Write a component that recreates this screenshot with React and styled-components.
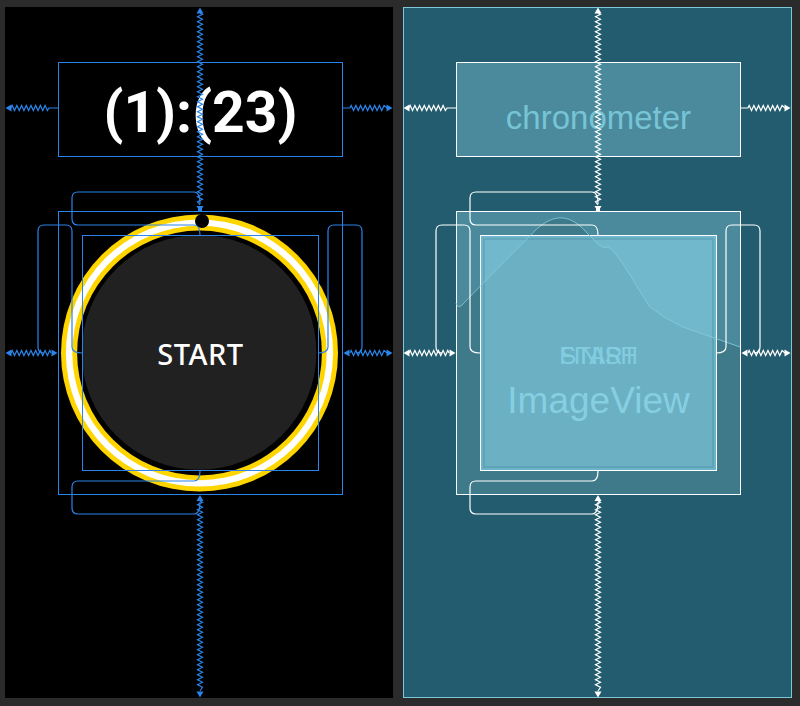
import React from "react";
import styled, { createGlobalStyle, css } from "styled-components";

const BLUE = "#2a84ea";

const GlobalStyle = createGlobalStyle`
  html, body {
    margin: 0;
    padding: 0;
    background: #2b2b2b;
  }
  body {
    font-family: "Liberation Sans", Arial, sans-serif;
  }
`;

const Page = styled.div`
  display: flex;
  gap: 10px;
  width: 800px;
  height: 706px;
  box-sizing: border-box;
  padding: 7px 0 0 5px;
  background: #2b2b2b;
`;

// one editor surface: design (black) or blueprint (teal)
const Panel = styled.div`
  position: relative;
  box-sizing: border-box;
  width: ${(p) => (p.$blueprint ? 389 : 388)}px;
  height: 691px;
  display: flex;
  flex-direction: column;
  gap: 54px;
  padding: 55px 0 0 53px;
  background: ${(p) => (p.$blueprint ? "#245c6f" : "#000")};
  ${(p) =>
    p.$blueprint &&
    css`
      box-shadow: inset 0 0 0 1px #7cc8d8;
    `}
`;

const ChronoBox = styled.div`
  width: 285px;
  height: 95px;
  box-sizing: border-box;
  display: flex;
  align-items: center;
  justify-content: center;
  border: 1px solid ${(p) => (p.$blueprint ? "#fff" : BLUE)};
  background: ${(p) => (p.$blueprint ? "#4a8a9c" : "transparent")};
  padding-top: ${(p) => (p.$blueprint ? 16 : 6)}px;
`;

const ChronoText = styled.span`
  font-family: Roboto, "Liberation Sans", sans-serif;
  font-weight: 700;
  font-size: 57px;
  line-height: 1;
  color: #fff;
`;

const ChronoLabel = styled.span`
  font-family: "Liberation Sans", Arial, sans-serif;
  font-size: 33px;
  line-height: 1;
  color: #77c4d7;
`;

const ImageFrame = styled.div`
  position: relative;
  width: 285px;
  height: 284px;
  box-sizing: border-box;
  display: flex;
  align-items: center;
  justify-content: center;
  border: 1px solid ${(p) => (p.$blueprint ? "#fff" : BLUE)};
  background: ${(p) => (p.$blueprint ? "#4a8a9c" : "transparent")};
`;

const FrameArt = styled.svg`
  position: absolute;
  top: -1px;
  left: -1px;
  width: 285px;
  height: 284px;
`;

const InnerBox = styled.div`
  position: relative;
  z-index: 1;
  width: 237px;
  height: 236px;
  box-sizing: border-box;
  display: flex;
  flex-direction: column;
  align-items: center;
  ${(p) =>
    p.$blueprint
      ? css`
          justify-content: flex-start;
          padding-top: 108px;
          border: 1.5px solid #fff;
          background: rgba(154, 230, 252, 0.5);
          box-shadow: inset 0 0 0 2px rgba(120, 190, 212, 0.6),
            inset 0 0 0 4px rgba(70, 140, 160, 0.35);
        `
      : css`
          justify-content: center;
          border: 1px solid ${BLUE};
        `}
`;

const StartLabel = styled.span`
  font-family: "Noto Sans", "DejaVu Sans", sans-serif;
  font-weight: 500;
  font-size: 29px;
  letter-spacing: 0.5px;
  line-height: 1;
  color: #fff;
`;

const Overlap = styled.div`
  display: grid;
  justify-items: center;
  & > span {
    grid-area: 1 / 1;
  }
`;

const GhostText = styled.span`
  font-family: "Liberation Sans", Arial, sans-serif;
  font-size: ${(p) => p.$size}px;
  line-height: 1;
  color: ${(p) => p.$color};
  margin-top: ${(p) => p.$gap || 0}px;
`;

const Overlay = styled.svg`
  position: absolute;
  top: 0;
  left: 0;
  width: 388px;
  height: 691px;
  z-index: 2;
  pointer-events: none;
`;

const zigV = (x, y1, y2, a = 2.5, p = 5) => {
  let d = `M${x} ${y1}`;
  let s = 1;
  for (let y = y1 + p / 4; y < y2 - p / 4; y += p / 2) {
    d += ` L${x + a * s} ${y}`;
    s = -s;
  }
  return d + ` L${x} ${y2}`;
};

const zigH = (y, x1, x2, a = 2.5, p = 4.7) => {
  let d = `M${x1} ${y}`;
  let s = -1;
  for (let x = x1 + p / 4; x < x2 - p / 4; x += p / 2) {
    d += ` L${x} ${y + a * s}`;
    s = -s;
  }
  return d + ` L${x2} ${y}`;
};

const tri = (x, y, dir, s = 6, w = 3.5) => {
  if (dir === "up") return `M${x} ${y} L${x - w} ${y + s} L${x + w} ${y + s}Z`;
  if (dir === "down") return `M${x} ${y} L${x - w} ${y - s} L${x + w} ${y - s}Z`;
  if (dir === "left") return `M${x} ${y} L${x + s} ${y - w} L${x + s} ${y + w}Z`;
  return `M${x} ${y} L${x - s} ${y - w} L${x - s} ${y + w}Z`;
};

const CURVE_BODY =
  "Q55 302 59 298 C 90 266, 110 246, 124 232 C 140 214, 160 198, 184 226 L196 238 Q201 242 205 240 Q212 243 230 273 Q240 290 247 300 Q262 312 280 320 L337 340";
const CURVE = "M53 296 " + CURVE_BODY;
const SHADE = "M54 297 " + CURVE_BODY + " L337 487 L54 487 Z";

const TOP_BRACKET =
  "M195 197 Q195 185 189 185 H73 Q67 185 67 191 V212 Q67 218 73 218 H189 Q195 218 195 228";
const LEFT_BRACKET =
  "M33 224 V340 Q33 346 39 346 M39 218 H61 M33 224 Q33 218 39 218 M61 218 Q67 218 67 224 V340 Q67 346 77 346";

function Brackets() {
  return (
    <g fill="none">
      <path d={TOP_BRACKET} />
      <path d={TOP_BRACKET} transform="matrix(1 0 0 -1 0 692)" />
      <path d={LEFT_BRACKET} />
      <path d={LEFT_BRACKET} transform="matrix(-1 0 0 1 390 0)" />
    </g>
  );
}

function Constraints({ color, blueprint }) {
  return (
    <Overlay viewBox="0 0 388 691">
      {blueprint && (
        <path d={CURVE} fill="none" stroke="#86c9d9" strokeWidth="1" opacity="0.85" />
      )}
      <g stroke={color} strokeWidth="1.2" fill="none">
        <path d={zigV(195, 6, 198)} />
        <path d={zigV(195, 494, 684)} />
        <path d={zigH(101, 6, 44) + " L53 101"} />
        <path d={"M338 101 L345 101 " + zigH(101, 345, 382)} />
        <path d={zigH(346, 6, 46)} />
        <path d={zigH(346, 345, 382)} />
        <Brackets />
      </g>
      <g fill={color}>
        <path d={tri(195, 0.5, "up")} />
        <path d={tri(195, 205, "down")} />
        <rect x="193" y="199" width="4" height="6" />
        <path d={tri(195, 488, "up")} />
        <path d={tri(195, 690.5, "down")} />
        <path d={tri(0.5, 101, "left")} />
        <path d={tri(387.5, 101, "right")} />
        <path d={tri(0.5, 346, "left")} />
        <path d={tri(52.5, 346, "right")} />
        <path d={tri(338.5, 346, "left")} />
        <path d={tri(387.5, 346, "right")} />
      </g>
    </Overlay>
  );
}

function RingArt() {
  return (
    <FrameArt viewBox="0 0 285 284">
      <circle cx="141.5" cy="142" r="138.5" fill="#ffd500" />
      <circle cx="141.5" cy="142" r="133.6" fill="#fff" />
      <circle cx="141.5" cy="142" r="127.2" fill="#ffd500" />
      <circle cx="141.5" cy="142" r="122.4" fill="#000" />
      <circle cx="141" cy="141.3" r="117.4" fill="#212121" />
      <circle cx="144" cy="10" r="7" fill="#000" />
    </FrameArt>
  );
}

function CurveShade() {
  return (
    <FrameArt viewBox="0 0 285 284">
      <path d={SHADE} transform="translate(-53 -204)" fill="#3f7a8b" />
    </FrameArt>
  );
}

export default function App() {
  return (
    <>
      <GlobalStyle />
      <Page>
        <Panel>
          <ChronoBox>
            <ChronoText>(1):(23)</ChronoText>
          </ChronoBox>
          <ImageFrame>
            <RingArt />
            <InnerBox>
              <StartLabel>START</StartLabel>
            </InnerBox>
          </ImageFrame>
          <Constraints color={BLUE} />
        </Panel>

        <Panel $blueprint>
          <ChronoBox $blueprint>
            <ChronoLabel>chronometer</ChronoLabel>
          </ChronoBox>
          <ImageFrame $blueprint>
            <CurveShade />
            <InnerBox $blueprint>
              <Overlap>
                <GhostText $size={24} $color="#82cde0">START</GhostText>
                <GhostText $size={24} $color="#82cde0">FINISH</GhostText>
              </Overlap>
              <GhostText $size={37} $color="#86cfe2" $gap={14}>
                ImageView
              </GhostText>
            </InnerBox>
          </ImageFrame>
          <Constraints color="#fff" blueprint />
        </Panel>
      </Page>
    </>
  );
}
